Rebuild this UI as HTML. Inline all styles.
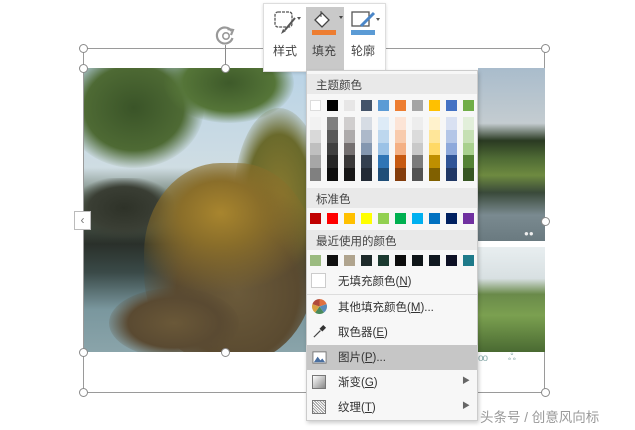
<!DOCTYPE html>
<html><head><meta charset="utf-8">
<style>
*{margin:0;padding:0;box-sizing:border-box}
body{width:635px;height:430px;overflow:hidden;background:#fff;position:relative;font-family:"Liberation Sans","Noto Sans CJK SC",sans-serif;}
.a{position:absolute}
.h{position:absolute;width:9px;height:9px;border:1.5px solid #8a8a8a;border-radius:50%;background:#fff}
.sw{position:absolute;width:11px;height:11px}
.col{position:absolute;top:117px;width:11px;height:64px;display:flex;flex-direction:column}
.col i{flex:1;display:block}
.hdr{position:absolute;left:307px;width:170px;height:20px;background:#e9e9e9;font-size:11.5px;color:#444;padding:3px 0 0 9px}
.it{position:absolute;left:338px;font-size:11.5px;color:#333}
.ic{position:absolute;left:312px;width:15px;height:15px}
</style></head><body>
<div class="a" style="left:83px;top:48px;width:462px;height:345px;border:1px solid #9a9a9a"></div>
<!-- left photo -->
<div class="a" style="left:84px;top:68px;width:222px;height:284px;overflow:hidden;background:linear-gradient(180deg,#b9d3e6 0%,#cfdde3 35%,#5a6a5a 48%,#2a302a 62%,#3a4a48 72%,#7a979e 85%,#8aa4aa 100%)">
 <div class="a" style="left:-20px;top:-20px;width:140px;height:120px;border-radius:50%;background:radial-gradient(ellipse at center,#3a5428 0,#4e6a34 50%,rgba(80,110,60,0) 72%)"></div>
 <div class="a" style="left:80px;top:-25px;width:130px;height:80px;border-radius:50%;background:radial-gradient(ellipse at center,#3e5a2a 0,#557538 50%,rgba(80,110,60,0) 72%)"></div>
 <div class="a" style="left:-10px;top:110px;width:100px;height:60px;background:radial-gradient(ellipse at center,#2e3228 0,#3a3e34 50%,rgba(40,40,30,0) 75%)"></div>
 <div class="a" style="left:150px;top:40px;width:90px;height:180px;border-radius:50%;background:radial-gradient(ellipse at center,#8a7a30 0,#6a6a2c 50%,rgba(80,80,40,0) 75%)"></div>
 <div class="a" style="left:60px;top:95px;width:170px;height:200px;border-radius:45%;background:radial-gradient(ellipse 60% 40% at 45% 25%,#a8852e 0,#8a6e2a 40%,rgba(110,90,50,0) 100%),radial-gradient(ellipse 60% 55% at 55% 65%,#6b5a3a 0,#5a4a30 60%,rgba(70,60,40,0) 100%)"></div>
 <div class="a" style="left:25px;top:220px;width:130px;height:70px;border-radius:50%;background:radial-gradient(ellipse at center,#6a5838 0,#5a4a32 50%,rgba(80,70,50,0) 75%)"></div>
</div>
<!-- right photos -->
<div class="a" style="left:478px;top:68px;width:67px;height:173px;background:linear-gradient(180deg,#a9bccc 0%,#c4ccd0 32%,#2a3a22 42%,#4e6a34 52%,#6e8a40 62%,#3a4a3a 72%,#7a8a90 85%,#6a7a80 100%)"></div>
<div class="a" style="left:478px;top:247px;width:67px;height:105px;background:linear-gradient(180deg,#e8eef0 0%,#d8e0e2 30%,#6a8a4a 45%,#7ba050 65%,#4a6a32 100%)"></div>
<div class="a" style="left:478px;top:241px;width:67px;height:6px;background:#fff"></div>
<div class="h" style="left:79px;top:44px"></div>
<div class="h" style="left:541px;top:44px"></div>
<div class="h" style="left:79px;top:64px"></div>
<div class="h" style="left:221px;top:64px"></div>
<div class="h" style="left:79px;top:348px"></div>
<div class="h" style="left:221px;top:348px"></div>
<div class="h" style="left:79px;top:388px"></div>
<div class="h" style="left:541px;top:388px"></div>
<div class="h" style="left:541px;top:217px"></div>
<div class="a" style="left:225px;top:45px;width:1px;height:20px;background:#8a8a8a"></div>
<svg class="a" style="left:215px;top:25px" width="22" height="22"><path d="M16.5 6 A8 8 0 1 0 17.5 13" fill="none" stroke="#999" stroke-width="2.2"/><path d="M12.5 4 L18 5 L16 10" fill="none" stroke="#999" stroke-width="2.2"/><circle cx="11" cy="11" r="3.2" fill="none" stroke="#999" stroke-width="1.6"/></svg>
<div class="a" style="left:74px;top:211px;width:17px;height:19px;background:#fff;border:1px solid #bbb;font-size:12px;color:#777;text-align:center;line-height:17px">‹</div>
<div class="a" style="left:524px;top:229px;font-size:8px;color:#eee">●●</div>
<div class="a" style="left:478px;top:353px;font-size:10px;color:#8aa;letter-spacing:-1px">oo</div>
<div class="a" style="left:508px;top:352px;font-size:10px;color:#8aa">ஃ</div>
<div class="a" style="left:480px;top:406px;font-size:13.5px;color:#999">头条号 / 创意风向标</div>

<div class="a" style="left:263px;top:3px;width:123px;height:69px;background:#fff;border:1px solid #ddd;box-shadow:0 1px 3px rgba(0,0,0,.15)"></div>
<div class="a" style="left:306px;top:7px;width:38px;height:65px;background:#c9c9c9"></div>
<svg class="a" style="left:273px;top:10px" width="30" height="26"><rect x="2" y="2" width="17" height="15" rx="3" fill="none" stroke="#555" stroke-width="1.3" stroke-dasharray="3 1"/><path d="M22 8 L12 20" stroke="#555" stroke-width="2"/><path d="M10 19 l3 2 -5 3z" fill="#555"/><path d="M24 7 l4 0 -2 3z" fill="#555"/></svg>
<svg class="a" style="left:311px;top:8px" width="32" height="28"><path d="M4 12 L11 5 L18 12 L11 19Z" fill="#fff" stroke="#444" stroke-width="1.3"/><path d="M10 3 v6" stroke="#444"/><path d="M28 8 l4 0 -2 3z" fill="#444"/><rect x="1" y="22" width="24" height="5" fill="#ed7d31"/></svg>
<svg class="a" style="left:350px;top:10px" width="32" height="26"><rect x="2" y="2" width="17" height="14" fill="none" stroke="#555" stroke-width="1.3"/><path d="M24 3 L11 16" stroke="#4a86c8" stroke-width="3"/><path d="M26 8 l4 0 -2 3z" fill="#555"/><rect x="1" y="20" width="24" height="5" fill="#5b9bd5"/></svg>
<div class="a" style="left:273px;top:42px;font-size:12px;color:#444">样式</div>
<div class="a" style="left:312px;top:42px;font-size:12px;color:#444">填充</div>
<div class="a" style="left:351px;top:42px;font-size:12px;color:#444">轮廓</div>

<div class="a" style="left:306px;top:70px;width:172px;height:351px;background:#f7f7f7;border:1px solid #ccc;box-shadow:1px 2px 4px rgba(0,0,0,.2)"></div>
<div class="hdr" style="top:74px">主题颜色</div>
<div class="sw" style="left:310px;top:100px;background:#fff;border:1px solid #ddd"></div>
<div class="sw" style="left:327px;top:100px;background:#000"></div>
<div class="sw" style="left:344px;top:100px;background:#e7e6e6"></div>
<div class="sw" style="left:361px;top:100px;background:#44546a"></div>
<div class="sw" style="left:378px;top:100px;background:#5b9bd5"></div>
<div class="sw" style="left:395px;top:100px;background:#ed7d31"></div>
<div class="sw" style="left:412px;top:100px;background:#a5a5a5"></div>
<div class="sw" style="left:429px;top:100px;background:#ffc000"></div>
<div class="sw" style="left:446px;top:100px;background:#4472c4"></div>
<div class="sw" style="left:463px;top:100px;background:#70ad47"></div>
<div class="col" style="left:310px"><i style="background:#f2f2f2"></i><i style="background:#d9d9d9"></i><i style="background:#bfbfbf"></i><i style="background:#a6a6a6"></i><i style="background:#808080"></i></div>
<div class="col" style="left:327px"><i style="background:#7f7f7f"></i><i style="background:#595959"></i><i style="background:#404040"></i><i style="background:#262626"></i><i style="background:#0d0d0d"></i></div>
<div class="col" style="left:344px"><i style="background:#d0cece"></i><i style="background:#aeabab"></i><i style="background:#757070"></i><i style="background:#3a3838"></i><i style="background:#171616"></i></div>
<div class="col" style="left:361px"><i style="background:#d6dce4"></i><i style="background:#adb9ca"></i><i style="background:#8497b0"></i><i style="background:#333f4f"></i><i style="background:#222a35"></i></div>
<div class="col" style="left:378px"><i style="background:#ddebf7"></i><i style="background:#bdd7ee"></i><i style="background:#9bc2e6"></i><i style="background:#2f75b5"></i><i style="background:#1f4e78"></i></div>
<div class="col" style="left:395px"><i style="background:#fce4d6"></i><i style="background:#f8cbad"></i><i style="background:#f4b084"></i><i style="background:#c65911"></i><i style="background:#833c0c"></i></div>
<div class="col" style="left:412px"><i style="background:#ededed"></i><i style="background:#dbdbdb"></i><i style="background:#c9c9c9"></i><i style="background:#7b7b7b"></i><i style="background:#525252"></i></div>
<div class="col" style="left:429px"><i style="background:#fff2cc"></i><i style="background:#ffe699"></i><i style="background:#ffd966"></i><i style="background:#bf8f00"></i><i style="background:#806000"></i></div>
<div class="col" style="left:446px"><i style="background:#d9e1f2"></i><i style="background:#b4c6e7"></i><i style="background:#8ea9db"></i><i style="background:#305496"></i><i style="background:#203764"></i></div>
<div class="col" style="left:463px"><i style="background:#e2efda"></i><i style="background:#c6e0b4"></i><i style="background:#a9d08e"></i><i style="background:#548235"></i><i style="background:#375623"></i></div>

<div class="hdr" style="top:188px">标准色</div>
<div class="sw" style="left:310px;top:213px;background:#c00000"></div>
<div class="sw" style="left:327px;top:213px;background:#ff0000"></div>
<div class="sw" style="left:344px;top:213px;background:#ffc000"></div>
<div class="sw" style="left:361px;top:213px;background:#ffff00"></div>
<div class="sw" style="left:378px;top:213px;background:#92d050"></div>
<div class="sw" style="left:395px;top:213px;background:#00b050"></div>
<div class="sw" style="left:412px;top:213px;background:#00b0f0"></div>
<div class="sw" style="left:429px;top:213px;background:#0070c0"></div>
<div class="sw" style="left:446px;top:213px;background:#002060"></div>
<div class="sw" style="left:463px;top:213px;background:#7030a0"></div>

<div class="hdr" style="top:230px">最近使用的颜色</div>
<div class="sw" style="left:310px;top:255px;background:#9bbb80"></div>
<div class="sw" style="left:327px;top:255px;background:#111"></div>
<div class="sw" style="left:344px;top:255px;background:#b0a48e"></div>
<div class="sw" style="left:361px;top:255px;background:#1e2a2a"></div>
<div class="sw" style="left:378px;top:255px;background:#1c3a30"></div>
<div class="sw" style="left:395px;top:255px;background:#0d0d0d"></div>
<div class="sw" style="left:412px;top:255px;background:#0f1518"></div>
<div class="sw" style="left:429px;top:255px;background:#101820"></div>
<div class="sw" style="left:446px;top:255px;background:#0d1024"></div>
<div class="sw" style="left:463px;top:255px;background:#1e7a8a"></div>

<div class="a" style="left:311px;top:273px;width:15px;height:15px;background:#fff;border:1px solid #ccc"></div>
<div class="it" style="top:273px">无填充颜色(<u>N</u>)</div>
<div class="a" style="left:307px;top:294px;width:170px;height:1px;background:#ddd"></div>
<svg class="ic" style="top:299px" viewBox="0 0 16 16"><path d="M8 8L8 0A8 8 0 0 1 15.6 5.5Z" fill="#e07040"/><path d="M8 8L15.6 5.5A8 8 0 0 1 12.7 14.5Z" fill="#5a8ab8"/><path d="M8 8L12.7 14.5A8 8 0 0 1 3.3 14.5Z" fill="#4a8a5a"/><path d="M8 8L3.3 14.5A8 8 0 0 1 0.4 5.5Z" fill="#d8a040"/><path d="M8 8L0.4 5.5A8 8 0 0 1 8 0Z" fill="#b04a3a"/></svg>
<div class="it" style="top:299px">其他填充颜色(<u>M</u>)...</div>
<svg class="ic" style="top:324px" viewBox="0 0 16 16"><path d="M2 14 L9 7" stroke="#444" stroke-width="1.3"/><path d="M8 5 L12 1 L15 4 L11 8Z" fill="#333"/></svg>
<div class="it" style="top:324px">取色器(<u>E</u>)</div>
<div class="a" style="left:307px;top:345px;width:170px;height:25px;background:#c6c6c6"></div>
<svg class="ic" style="top:350px" viewBox="0 0 16 16"><rect x="1" y="2" width="14" height="12" fill="#fff" stroke="#777"/><path d="M2 13 L6 7 L9 11 L11 9 L14 13Z" fill="#4a6fa0"/></svg>
<div class="it" style="top:349px">图片(<u>P</u>)...</div>
<div class="a" style="left:312px;top:375px;width:14px;height:14px;background:linear-gradient(135deg,#fff,#888);border:1px solid #777"></div>
<div class="it" style="top:374px">渐变(<u>G</u>)</div>
<div class="a" style="left:462px;top:375px;font-size:8px;color:#666">▶</div>
<div class="a" style="left:312px;top:400px;width:14px;height:14px;border:1px solid #777;background:repeating-linear-gradient(45deg,#fff 0 1px,#999 1px 2px)"></div>
<div class="it" style="top:399px">纹理(<u>T</u>)</div>
<div class="a" style="left:462px;top:400px;font-size:8px;color:#666">▶</div>
</body></html>
